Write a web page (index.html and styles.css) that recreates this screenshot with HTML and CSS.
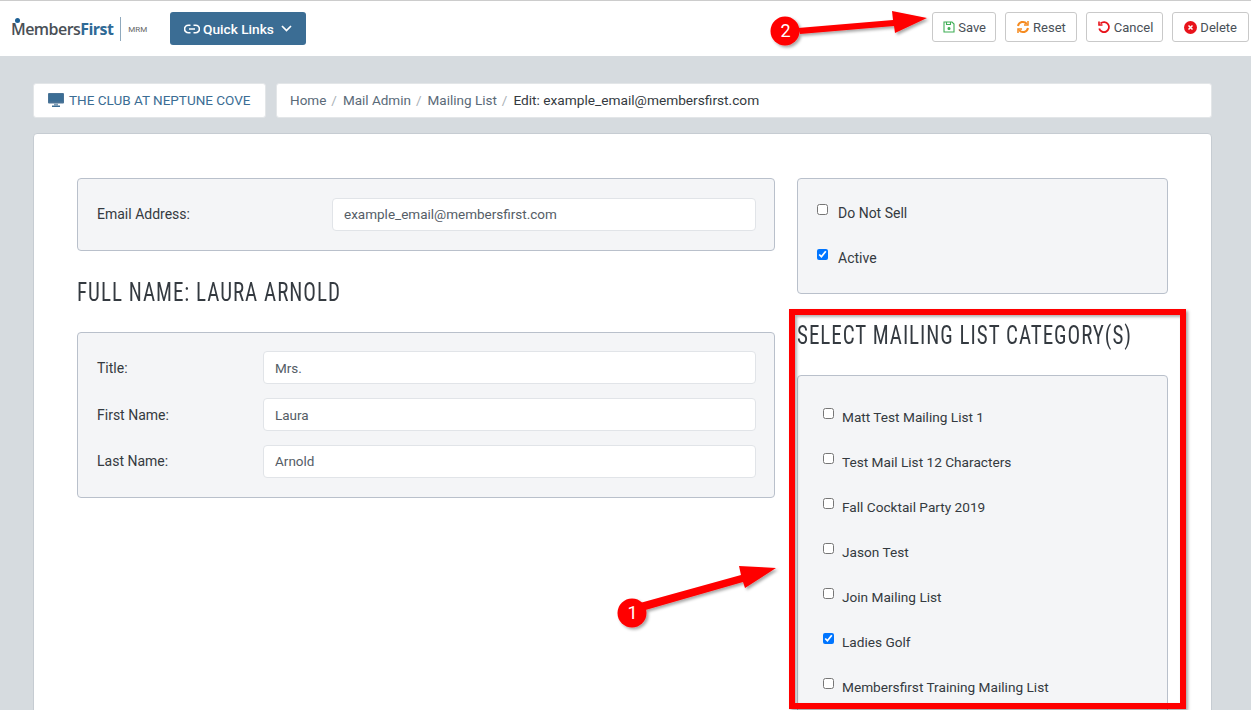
FILE: index.html
```html
<!DOCTYPE html>
<html lang="en">
<head>
    <meta charset="UTF-8">
    <title>Edit Mailing List Entry</title>
    <link rel="stylesheet" href="styles.css">
</head>
<body>
    <div class="barra-topo">
        <div class="logo">
            <span class="logo-nome">Members<b>First</b><i class="logo-ponto"></i></span>
            <span class="logo-mrm">MRM</span>
        </div>
        <button class="quick-links">
            <svg width="16" height="10" viewBox="0 0 16 10" fill="none" stroke="#fff" stroke-width="1.6"><path d="M6.5 1.2H4.4a3.8 3.8 0 0 0 0 7.6h2.1M9.500 1.2h2.100a3.800 3.800 0 0 1 0 7.600H9.500M5 5h6"/></svg>
            Quick Links
            <svg class="seta" width="11" height="7" viewBox="0 0 11 7" fill="none" stroke="#fff" stroke-width="1.700"><path d="M1 1l4.500 4.500L10 1"/></svg>
        </button>
        <div class="acoes">
            <button class="btn btn-save">
                <svg width="12" height="12" viewBox="0 0 12 12" fill="none" stroke="#3fae55" stroke-width="1.100"><path d="M1 1h8l2 2v8H1z"/><path d="M3.500 1v2.500h4V1"/><circle cx="6" cy="7.500" r="1" fill="#3fae55"/></svg>
                Save
            </button>
            <button class="btn">
                <svg width="14" height="14" viewBox="0 0 14 14" fill="none" stroke="#f58a1f" stroke-width="2"><path d="M2 6a5 5 0 0 1 8.800-2.200M12 8a5 5 0 0 1-8.800 2.200"/><path d="M12 1v4H8M2 13V9h4" stroke-width="1.500"/></svg>
                Reset
            </button>
            <button class="btn btn-cancel">
                <svg width="14" height="14" viewBox="0 0 14 14" fill="none" stroke="#e8131b" stroke-width="1.800"><path d="M3.500 3.500A5 5 0 1 1 2.200 8.500"/><path d="M2 1.500v3.500h3.500" stroke-width="1.600"/></svg>
                Cancel
            </button>
            <button class="btn btn-delete">
                <svg width="13" height="13" viewBox="0 0 13 13"><circle cx="6.500" cy="6.500" r="6.500" fill="#e8131b"/><path d="M4.500 4.500l4 4M8.500 4.500l-4 4" stroke="#fff" stroke-width="1.500"/></svg>
                Delete
            </button>
        </div>
    </div>

    <div class="pagina">
        <div class="linha-nav">
            <div class="clube">
                <svg width="16" height="14" viewBox="0 0 16 14"><rect x="0" y="0" width="16" height="10.500" rx="1" fill="#4a7396"/><rect x="1" y="1" width="14" height="7.500" fill="#3b6d94"/><rect x="6" y="10.500" width="4" height="2" fill="#7f9db5"/><rect x="4" y="12.500" width="8" height="1.500" fill="#3b6d94"/></svg>
                THE CLUB AT NEPTUNE COVE
            </div>
            <div class="migalhas">
                <span>Home</span><i>/</i>
                <span>Mail Admin</span><i>/</i>
                <span>Mailing List</span><i>/</i>
                <span class="atual">Edit: example_email@membersfirst.com</span>
            </div>
        </div>

        <div class="cartao">
            <div class="esquerda">
                <div class="painel painel-email">
                    <label class="rotulo-email">Email Address:</label>
                    <input class="campo" type="text" value="example_email@membersfirst.com">
                </div>
                <h2 class="titulo-nome">FULL NAME: LAURA ARNOLD</h2>
                <div class="painel painel-nome">
                    <div class="linha-campo">
                        <label>Title:</label>
                        <input class="campo" type="text" value="Mrs.">
                    </div>
                    <div class="linha-campo">
                        <label>First Name:</label>
                        <input class="campo" type="text" value="Laura">
                    </div>
                    <div class="linha-campo linha-ultima">
                        <label>Last Name:</label>
                        <input class="campo" type="text" value="Arnold">
                    </div>
                </div>
            </div>

            <div class="direita">
                <div class="painel painel-status">
                    <label class="check"><input type="checkbox"><span>Do Not Sell</span></label>
                    <label class="check"><input type="checkbox" checked><span>Active</span></label>
                </div>
                <h2 class="titulo-lista">SELECT MAILING LIST CATEGORY(S)</h2>
                <div class="painel painel-lista">
                    <label class="check"><input type="checkbox"><span>Matt Test Mailing List 1</span></label>
                    <label class="check"><input type="checkbox"><span>Test Mail List 12 Characters</span></label>
                    <label class="check"><input type="checkbox"><span>Fall Cocktail Party 2019</span></label>
                    <label class="check"><input type="checkbox"><span>Jason Test</span></label>
                    <label class="check"><input type="checkbox"><span>Join Mailing List</span></label>
                    <label class="check"><input type="checkbox" checked><span>Ladies Golf</span></label>
                    <label class="check"><input type="checkbox"><span>Membersfirst Training Mailing List</span></label>
                </div>
            </div>
        </div>
    </div>

    <!-- anotacoes por cima da tela -->
    <div class="destaque"></div>
    <svg class="setas" width="1251" height="710" viewBox="0 0 1251 710">
        <defs>
            <filter id="sombra" x="-20%" y="-20%" width="140%" height="140%">
                <feDropShadow dx="2" dy="2" stdDeviation="1.500" flood-color="#000" flood-opacity="0.35"/>
            </filter>
        </defs>
        <g fill="#f00" filter="url(#sombra)">
            <path d="M798 28L893 20L892 11L927 18L895 33L894 26L800 34z"/>
            <path d="M640 603L741 575L739 566L776 568L745 588L743 582L642 611z"/>
            <circle cx="785" cy="31" r="14.500"/>
            <circle cx="632" cy="613" r="14.500"/>
        </g>
    </svg>
    <div class="num num-2">2</div>
    <div class="num num-1">1</div>
</body>
</html>
```

FILE: styles.css
```css
html, body {
    margin: 0;
    height: 710px;
    overflow: hidden;
}

body {
    position: relative;
    font-family: Roboto, "Noto Sans", Arial, sans-serif;
    font-size: 14px;
    color: #343a40;
    background-color: #d6dbdf;
}

.barra-topo {
    display: flex;
    align-items: flex-start;
    box-sizing: border-box;
    height: 56px;
    padding: 11px 2px 0 11px;
    background-color: #fff;
    border-top: 1px solid #ccc;
}

.logo {
    display: flex;
    align-items: center;
    width: 159px;
    height: 30px;
    margin-top: 2px;
}

.logo-nome {
    position: relative;
    padding: 0 7px 0 0;
    border-right: 1px solid #8fa9bd;
    font-family: "Open Sans", Arial, sans-serif;
    font-size: 16px;
    line-height: 24px;
    font-weight: 600;
    letter-spacing: -0.550px;
    color: #4a5056;
}

.logo-nome b {
    font-weight: 700;
    color: #2f6a96;
}

.logo-ponto {
    position: absolute;
    left: 4px;
    top: 1px;
    width: 5px;
    height: 5px;
    border-radius: 50%;
    background-color: #1c5f94;
}

.logo-mrm {
    margin-left: 7px;
    font-size: 8px;
    color: #666;
}

.quick-links {
    display: flex;
    align-items: center;
    gap: 3px;
    box-sizing: border-box;
    width: 136px;
    height: 33px;
    padding: 0 0 0 14px;
    border: none;
    border-radius: 3px;
    background-color: #3b6d94;
    color: #fff;
    font-family: inherit;
    font-size: 13.700px;
    font-weight: 500;
}

.quick-links .seta {
    margin-left: 4px;
}

.acoes {
    display: flex;
    gap: 9px;
    margin-left: auto;
}

.btn {
    display: flex;
    align-items: center;
    gap: 3px;
    height: 30px;
    padding: 0 10px;
    border: 1px solid #c9c9c9;
    border-radius: 3px;
    background-color: #fff;
    color: #495057;
    font-family: inherit;
    font-size: 13px;
}

.btn-save {
    padding-right: 9px;
}

.btn-cancel {
    padding-right: 9px;
}

.btn-delete {
    padding: 0 11px;
}

.pagina {
    padding: 27px 39px 0 33px;
}

.linha-nav {
    display: flex;
    gap: 10px;
    height: 35px;
    margin-bottom: 15px;
}

.clube, .migalhas {
    display: flex;
    align-items: center;
    padding-bottom: 1px;
    background-color: #fff;
    border-radius: 3px;
}

.clube {
    gap: 5px;
    width: 233px;
    box-sizing: border-box;
    padding-left: 14px;
    color: #3b6d94;
    font-size: 13.500px;
    border: 1px solid #e3e6e8;
}

.migalhas {
    flex: 1;
    padding-left: 13px;
    font-size: 13.500px;
    color: #5a6a78;
    border: 1px solid #e3e6e8;
}

.migalhas i {
    margin: 0 6px 0 5px;
    font-style: normal;
    color: #a9b0b6;
}

.migalhas .atual {
    font-size: 13.700px;
    color: #343a40;
}

.cartao {
    display: flex;
    gap: 22px;
    box-sizing: border-box;
    height: 620px;
    padding: 44px 43px 0;
    background-color: #fff;
    border: 1px solid #c6ccd2;
    border-radius: 4px;
}

.esquerda {
    width: 698px;
}

.direita {
    width: 371px;
}

.painel {
    box-sizing: border-box;
    background-color: #f4f5f7;
    border: 1px solid #b9c0cb;
    border-radius: 4px;
}

.painel-email {
    display: flex;
    align-items: center;
    height: 73px;
    padding: 0 18px 0 19px;
}

.rotulo-email {
    width: 235px;
    margin-bottom: 2px;
}

.painel-email .campo {
    padding-bottom: 2px;
}

.campo {
    flex: 1;
    box-sizing: border-box;
    height: 33px;
    padding: 0 11px;
    border: 1px solid #e1e4e8;
    border-radius: 4px;
    background-color: #fff;
    color: #555d66;
    font-family: inherit;
    font-size: 13.500px;
}

.titulo-nome, .titulo-lista {
    margin: 0;
    font-family: "Roboto Condensed", Roboto, sans-serif;
    font-weight: 400;
    font-size: 26px;
    line-height: 30px;
    letter-spacing: 1.200px;
    color: #343a40;
    white-space: nowrap;
    transform: scaleX(0.81);
    transform-origin: left center;
}

.titulo-nome {
    padding: 26px 0 25px;
}

.titulo-lista {
    padding: 26px 0 25px;
}

.painel-nome {
    display: flex;
    flex-direction: column;
    gap: 14px;
    height: 166px;
    padding: 18px 18px 0 19px;
}

.linha-campo {
    display: flex;
    align-items: center;
}

.linha-ultima label {
    margin-bottom: 2px;
}

.linha-ultima .campo {
    padding-bottom: 2px;
}

.linha-campo label {
    width: 166px;
}

.painel-status {
    display: flex;
    flex-direction: column;
    gap: 27px;
    height: 116px;
    padding: 25px 19px 0;
}

.painel-lista {
    display: flex;
    flex-direction: column;
    gap: 27px;
    height: 401px;
    padding: 32px 25px 0;
    font-size: 13.650px;
}

.check {
    display: flex;
    align-items: flex-start;
    height: 18px;
    line-height: 18px;
}

.check input {
    width: 11px;
    height: 11px;
    margin: 0 8px 0 0;
}

.painel-status .check input {
    margin-right: 10px;
}

/* anotacoes */
.destaque {
    position: absolute;
    left: 789px;
    top: 309px;
    width: 385px;
    height: 388px;
    border: 6px solid #f00;
    box-shadow: 2px 2px 3px rgba(0, 0, 0, 0.35), inset 2px 2px 3px rgba(0, 0, 0, 0.3);
}

.setas {
    position: absolute;
    left: 0;
    top: 0;
}

.num {
    position: absolute;
    width: 29px;
    line-height: 29px;
    text-align: center;
    color: #fff;
    font-size: 18px;
}

.num-2 {
    left: 771px;
    top: 16px;
}

.num-1 {
    left: 618px;
    top: 598px;
}
```
